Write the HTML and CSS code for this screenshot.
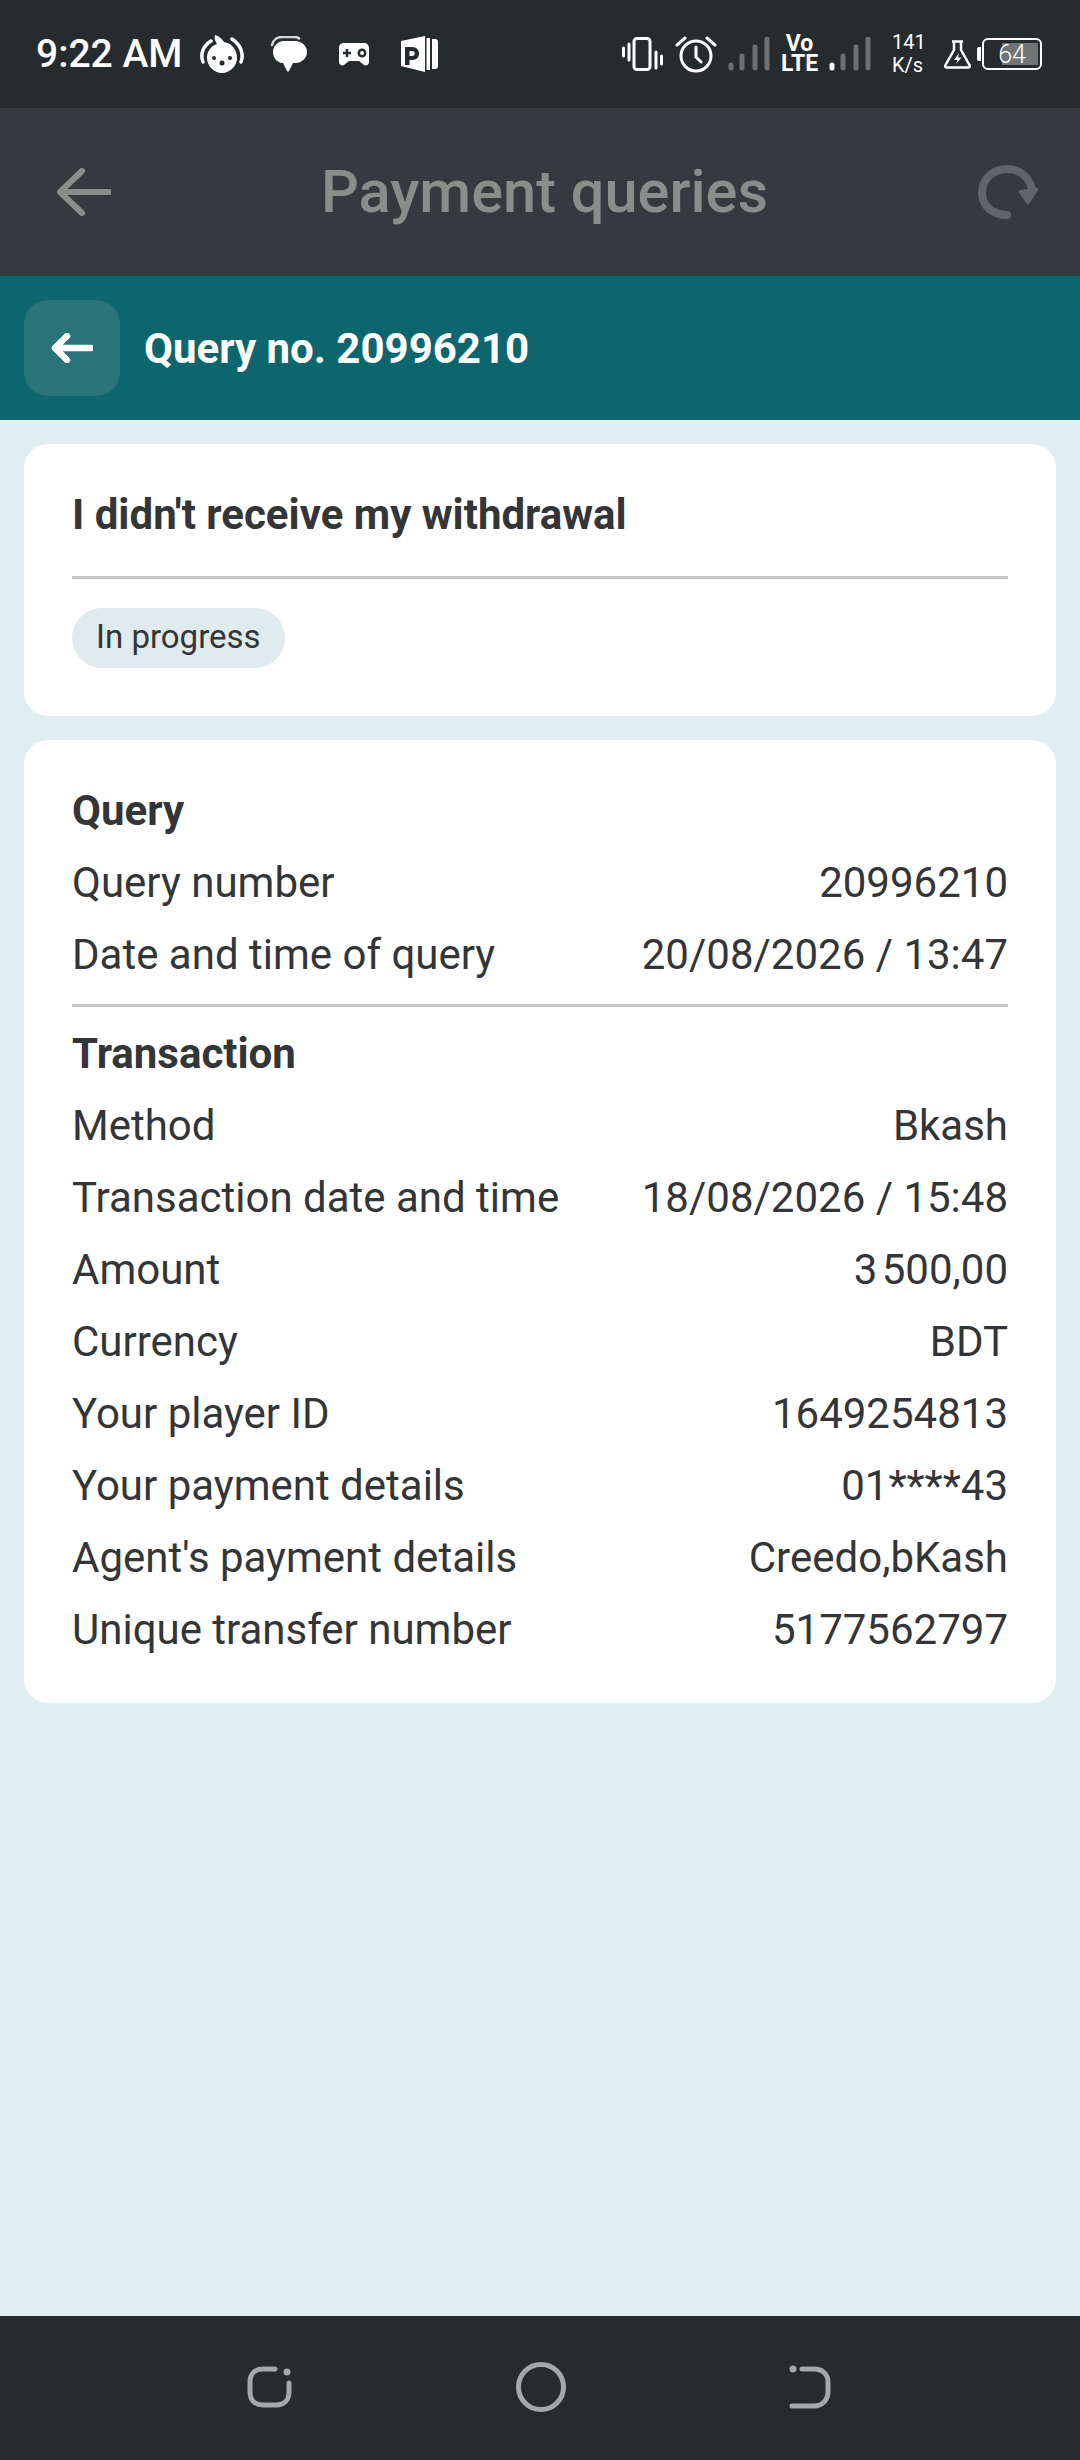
FILE: index.html
```html
<!doctype html>
<html>
  <head>
    <title>Payment queries</title>
    <link rel="stylesheet" href="styles.css">
  </head>
  <body>
    <div class="statusBar">
      <div class="statusLeft">
        <span class="clock">9:22 AM</span>
        <svg class="ic icChick" width="44" height="38" viewBox="0 0 44 38">
          <path d="M15 0c4 1 7 4 9 7 8 1 13 8 13 16 0 8-7 15-15 15S7 31 7 23c0-7 4-12 10-14-2-3-3-6-2-9z" fill="#fff"/>
          <path d="M3 27C0 19 3 11 11 6M41 27c3-8 0-17-9-23" fill="none" stroke="#fff" stroke-width="3.500" stroke-linecap="round"/>
          <circle cx="14" cy="23" r="2" fill="#262b2e"/><circle cx="30" cy="23" r="2" fill="#262b2e"/><circle cx="22" cy="28" r="2.500" fill="#262b2e"/>
        </svg>
        <svg class="ic icBubble" width="37" height="36" viewBox="0 0 37 36">
          <path d="M2 9c1-5 5-8 10-8h12c2 0 4 .5 5 1.500" fill="none" stroke="#d4d6d6" stroke-width="2.500" stroke-linecap="round"/>
          <path d="M14 5h11c7 0 12 5 12 11s-5 11-12 11h-2l-4 8c-.5 1-1.500 1-2 0l-4-8h-1C6 26 3 21 3 16S7 5 14 5z" fill="#fff"/>
        </svg>
        <svg class="ic icGame" width="32" height="23" viewBox="0 0 32 23">
          <path d="M6 0h20c3 0 5 2 5 5v14c0 3-3 4-5 3l-5-4H11l-5 4c-2 1-5 0-5-3V5c0-3 2-5 5-5z" fill="#fff"/>
          <path d="M5 10h8M9 6v8" stroke="#262b2e" stroke-width="2.500"/>
          <circle cx="24" cy="10" r="3.200" fill="none" stroke="#262b2e" stroke-width="2.500"/>
        </svg>
        <svg class="ic icPocket" width="37" height="36" viewBox="0 0 37 36">
          <path d="M0 5 24 0v36L0 30z" fill="#fff"/>
          <path d="M25.500 2h3.500v32h-3.500zM31 3h3c2 0 3 1 3 3v24c0 2-1 3-3 3h-3z" fill="#fff"/>
          <path d="M4 29V11h7c5 0 7 3 7 6.500S16 24 11 24H8.500v5zM8.500 15v5H11c2 0 2.800-1 2.800-2.500S13 15 11 15z" fill="#262b2e" fill-rule="evenodd"/>
        </svg>
      </div>
      <div class="statusRight">
        <svg class="ic" width="41" height="34" viewBox="0 0 41 34">
          <rect x="12" y="1.500" width="16" height="31" rx="3" fill="none" stroke="#fff" stroke-width="3"/>
          <path d="M1.500 11v8M7 7v16M34 15v16M39.500 19v8" stroke="#fff" stroke-width="3" stroke-linecap="round"/>
        </svg>
        <svg class="ic icAlarm" width="42" height="38" viewBox="0 0 42 38">
          <circle cx="21" cy="21" r="15" fill="none" stroke="#fff" stroke-width="3"/>
          <path d="M21 12v10l5 5M2 10l8-7M40 10l-8-7" fill="none" stroke="#fff" stroke-width="3" stroke-linecap="round"/>
        </svg>
        <svg class="ic icSignal" width="42" height="34" viewBox="0 0 42 34">
          <path d="M3 28v3M14 19v12M27 10v21M39 2v29" stroke="#6b7072" stroke-width="5" stroke-linecap="round"/>
        </svg>
        <span class="volte">Vo<br>LTE</span>
        <svg class="ic icSignal" width="42" height="34" viewBox="0 0 42 34">
          <path d="M3 28v3" stroke="#fff" stroke-width="5" stroke-linecap="round"/>
          <path d="M14 19v12M27 10v21M39 2v29" stroke="#6b7072" stroke-width="5" stroke-linecap="round"/>
        </svg>
        <span class="netSpeed">141<br>K/s</span>
        <svg class="ic icFlask" width="27" height="29" viewBox="0 0 27 29">
          <path d="M8 1.500h11M10 2v8L1.500 25c-.7 1.500 0 2.500 1.500 2.500h21c1.500 0 2.200-1 1.500-2.500L17 10V2" fill="none" stroke="#fff" stroke-width="2.500" stroke-linejoin="round"/>
          <path d="M15 13l-5 7h3.500l-1.500 4 5.500-6.500H14z" fill="#fff"/>
        </svg>
        <div class="battery">
          <span class="batteryCap"></span>
          <div class="batteryBody"><span class="batteryFill"></span><span class="batteryText">64</span></div>
        </div>
      </div>
    </div>

    <div class="appHeader">
      <svg class="headerBack" width="54" height="48" viewBox="0 0 54 48">
        <path d="M52 24H4M25 3 3 24l22 21" fill="none" stroke="#898e8a" stroke-width="6" stroke-linecap="round" stroke-linejoin="round"/>
      </svg>
      <h1 class="headerTitle">Payment queries</h1>
      <svg class="headerRefresh" width="60" height="54" viewBox="0 0 60 54">
        <path d="M29 50C15 50 4 41 4 28 4 14 15 4 29 4c13 0 22 8 25 20" fill="none" stroke="#5f6568" stroke-width="8" stroke-linecap="round"/>
        <path d="M43 27 58 25 50 37z" fill="#5f6568" stroke="#5f6568" stroke-width="4" stroke-linejoin="round"/>
      </svg>
    </div>

    <div class="subHeader">
      <div class="backButton">
        <svg width="42" height="30" viewBox="0 0 42 30">
          <path d="M40 15H5M16 3 4 15l12 12" fill="none" stroke="#fff" stroke-width="6.500" stroke-linecap="round" stroke-linejoin="round"/>
        </svg>
      </div>
      <span class="subTitle">Query no. 20996210</span>
    </div>

    <div class="content">
      <div class="card cardTop">
        <div class="queryTitle">I didn't receive my withdrawal</div>
        <div class="divider"></div>
        <span class="pill">In progress</span>
      </div>

      <div class="card cardDetails">
        <div class="row rowHead">Query</div>
        <div class="row"><span>Query number</span><span>20996210</span></div>
        <div class="row"><span>Date and time of query</span><span>20/08/2026 / 13:47</span></div>
        <div class="divider dividerInner"></div>
        <div class="row rowHead">Transaction</div>
        <div class="row"><span>Method</span><span>Bkash</span></div>
        <div class="row"><span>Transaction date and time</span><span>18/08/2026 / 15:48</span></div>
        <div class="row"><span>Amount</span><span>3&#8202;500,00</span></div>
        <div class="row"><span>Currency</span><span>BDT</span></div>
        <div class="row"><span>Your player ID</span><span>1649254813</span></div>
        <div class="row"><span>Your payment details</span><span>01****43</span></div>
        <div class="row"><span>Agent's payment details</span><span>Creedo,bKash</span></div>
        <div class="row"><span>Unique transfer number</span><span>5177562797</span></div>
      </div>
    </div>

    <div class="navBar">
      <svg width="46" height="42" viewBox="0 0 46 42">
        <path d="M28 3H16C8 3 3 8 3 16v10c0 8 5 13 13 13h13c8 0 13-5 13-13V17" fill="none" stroke="#a4a8aa" stroke-width="5" stroke-linecap="round"/>
        <circle cx="40" cy="6" r="3.500" fill="#a4a8aa"/>
      </svg>
      <svg width="50" height="50" viewBox="0 0 50 50">
        <circle cx="25" cy="25" r="22.500" fill="none" stroke="#a4a8aa" stroke-width="5"/>
      </svg>
      <svg width="42" height="44" viewBox="0 0 42 44">
        <path d="M13 4h12c8 0 14 5 14 13v10c0 8-6 14-14 14H3" fill="none" stroke="#a4a8aa" stroke-width="5" stroke-linecap="round"/>
        <circle cx="4" cy="4" r="3.500" fill="#a4a8aa"/>
      </svg>
    </div>
  </body>
</html>
```

FILE: styles.css
```css
* {
  box-sizing: border-box;
}

html, body {
  margin: 0;
  height: 2460px;
}

body {
  display: flex;
  flex-direction: column;
  background: #e0eeef;
  color: #333537;
  font-family: Roboto, "Noto Sans", sans-serif;
  overflow: hidden;
}

.ic {
  display: block;
  flex: none;
}

/* status bar */
.statusBar {
  display: flex;
  justify-content: space-between;
  align-items: center;
  height: 108px;
  padding: 0 38px 0 36px;
  background: #262b2e;
  color: #fff;
}

.statusLeft, .statusRight {
  display: flex;
  align-items: center;
}

.clock {
  font-size: 39px;
  font-weight: 500;
  margin-right: 18px;
}

.icBubble {
  margin-left: 26px;
}

.icGame {
  margin-left: 31px;
}

.icPocket {
  margin-left: 31px;
}

.icAlarm {
  margin-left: 12px;
}

.icSignal {
  margin-left: 11px;
}

.volte {
  width: 37px;
  margin-left: 11px;
  font-size: 23px;
  font-weight: 700;
  line-height: 20px;
  text-align: center;
}

.netSpeed {
  width: 30px;
  margin-left: 21px;
  font-size: 20px;
  line-height: 23px;
  text-align: center;
}

.icFlask {
  margin-left: 22px;
}

.battery {
  display: flex;
  align-items: center;
  margin-left: 6px;
}

.batteryCap {
  width: 4px;
  height: 14px;
  background: #fff;
  border-radius: 2px 0 0 2px;
  margin-right: 1px;
}

.batteryBody {
  position: relative;
  display: flex;
  align-items: center;
  justify-content: center;
  width: 60px;
  height: 32px;
  border: 2.500px solid #fff;
  border-radius: 6px;
  font-size: 25px;
  font-weight: 300;
}

.batteryFill {
  position: absolute;
  right: 2px;
  top: 3px;
  bottom: 3px;
  width: 36px;
  background: #6f7476;
}

.batteryText {
  position: relative;
}

/* app header */
.appHeader {
  display: flex;
  align-items: center;
  justify-content: space-between;
  height: 168px;
  padding: 0 42px 0 57px;
  background: #353a3f;
}

.headerTitle {
  margin: 0;
  font-size: 59.500px;
  font-weight: 500;
  color: #898e8a;
}

.subHeader {
  display: flex;
  align-items: center;
  height: 144px;
  padding-left: 24px;
  background: #0b666e;
}

.backButton {
  display: flex;
  align-items: center;
  justify-content: center;
  width: 96px;
  height: 96px;
  margin-right: 24px;
  border-radius: 24px;
  background: #2a7379;
}

.subTitle {
  font-size: 42px;
  font-weight: 700;
  color: #fff;
}

/* cards */
.content {
  flex: 1;
  display: flex;
  flex-direction: column;
  gap: 24px;
  padding: 24px;
}

.card {
  background: #fff;
  border-radius: 24px;
  padding-left: 48px;
  padding-right: 48px;
}

.cardTop {
  height: 272px;
  padding-top: 44px;
}

.queryTitle {
  font-size: 42px;
  font-weight: 700;
  line-height: 54px;
}

.divider {
  height: 3px;
  background: #c8c8c8;
}

.cardTop .divider {
  margin: 34px 0 29px;
}

.pill {
  display: inline-block;
  height: 60px;
  padding: 0 24px;
  border-radius: 30px;
  background: #dfebed;
  font-size: 33px;
  line-height: 58px;
}

.cardDetails {
  padding-top: 34px;
  padding-bottom: 38px;
}

.row {
  display: flex;
  justify-content: space-between;
  align-items: center;
  height: 72px;
  font-size: 42px;
}

.rowHead {
  font-weight: 700;
}

.dividerInner {
  margin: 14px 0 10px;
}

/* navigation bar */
.navBar {
  display: flex;
  justify-content: space-between;
  align-items: center;
  height: 144px;
  padding: 0 249px 2px 247px;
  background: #262b2e;
}
```
